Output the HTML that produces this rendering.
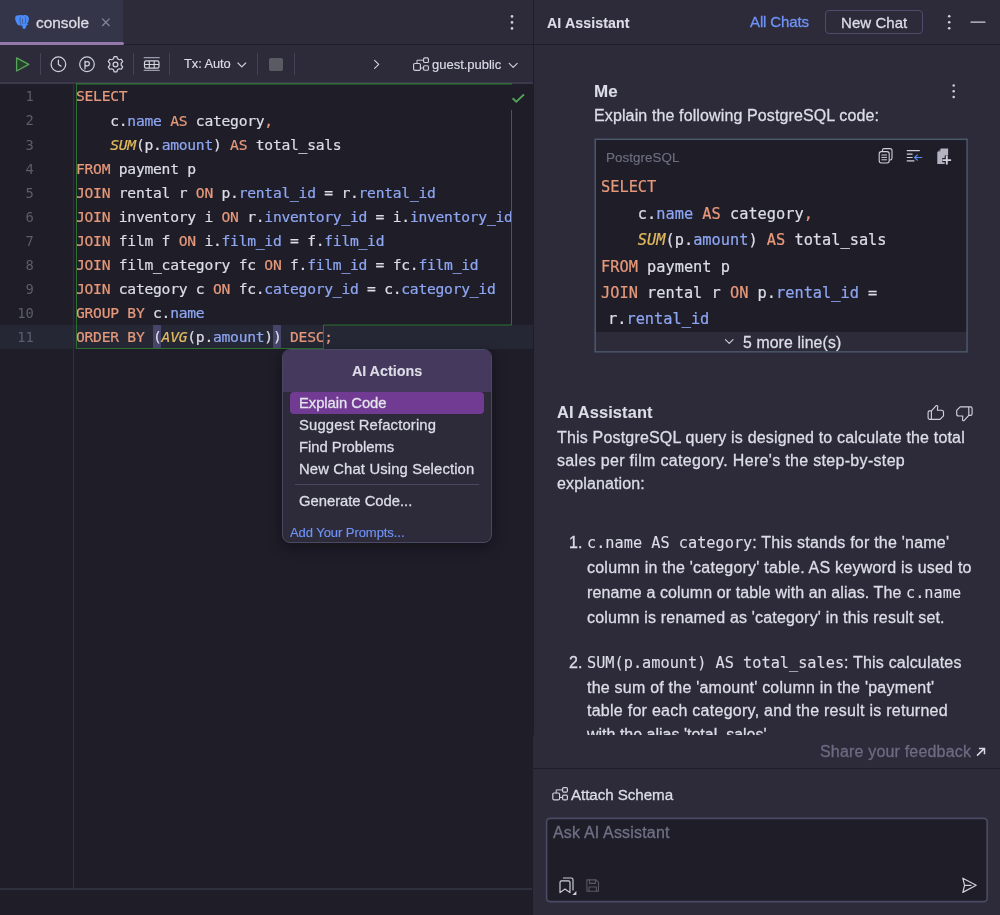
<!DOCTYPE html>
<html lang="en">
<head>
<meta charset="utf-8">
<title>console</title>
<style>
*{box-sizing:border-box;margin:0;padding:0}
html,body{width:1000px;height:915px;overflow:hidden;background:#2d2b3a}
body{position:relative;font-family:"Liberation Sans",sans-serif;color:#dcdde6;-webkit-font-smoothing:antialiased}
.abs{position:absolute}
.mono{font-family:"DejaVu Sans Mono","Liberation Mono",monospace}
.t{position:absolute;white-space:pre;line-height:1;will-change:transform;-webkit-text-stroke:0.3px currentColor}
svg{position:absolute;overflow:visible}

/* ---------- left: editor ---------- */
#left{position:absolute;left:0;top:0;width:533px;height:915px;background:#1e1d28;overflow:hidden}
#tabbar{position:absolute;left:0;top:0;width:533px;height:45px;background:#2d2b3a}
#tab{position:absolute;left:0;top:0;width:123px;height:44px;background:#353549}
#tabline{position:absolute;left:0;top:41.6px;width:123.5px;height:3.5px;background:#9379ac;border-radius:0 2px 2px 0;z-index:2}
#tbsep{position:absolute;left:123px;top:44px;width:410px;height:1px;background:#1f1d27}
#toolbar{position:absolute;left:0;top:45px;width:533px;height:39px;background:#2d2b3a;border-bottom:2px solid #3b3a4d}
.vsep{position:absolute;top:53px;width:1px;height:22px;background:#434456}
#gutline{position:absolute;left:73px;top:83px;width:1px;height:806px;background:#30313f}
#botline{position:absolute;left:0;top:888px;width:533px;height:2px;background:#2f303d}
#curline{position:absolute;left:0;top:325px;width:533px;height:24px;background:#262735}
.ln{will-change:transform;position:absolute;left:0;width:33.5px;text-align:right;color:#5b5d6c;font-size:13.8px;letter-spacing:-0.2px;line-height:1;white-space:pre}
.cl{-webkit-text-stroke:0.22px currentColor;will-change:transform;position:absolute;left:76.2px;white-space:pre;font-size:14.65px;letter-spacing:-0.255px;line-height:1;color:#dcdde6}
.k{color:#e6997b}.c{color:#8ea6f2}.f{color:#e2bb5f;font-style:italic}
.brk{background:#45465d}

/* ---------- popup ---------- */
#pop{position:absolute;left:282px;top:349px;width:210px;height:194px;border-radius:8px;background:#2d2a3a;border:1px solid #4c4861;overflow:hidden;box-shadow:0 4px 14px rgba(0,0,0,.35)}
#pophead{position:absolute;left:0;top:0;width:100%;height:42px;background:#45395d}
#sel{position:absolute;left:7px;top:41.7px;width:194px;height:22.2px;border-radius:4px;background:#713b94}
#popsep{position:absolute;left:12px;top:134px;width:184px;height:1px;background:#4b495f}

/* ---------- right: assistant ---------- */
#split{position:absolute;left:533px;top:0;width:1px;height:915px;background:#1f1d27}
#right{position:absolute;left:534px;top:0;width:466px;height:915px;background:#2d2b3a;overflow:hidden}
#rhline{position:absolute;left:0;top:44px;width:466px;height:1px;background:#1f1d27}
#newchat{position:absolute;left:291px;top:10px;width:98px;height:24px;border:1px solid #4d4d6b;border-radius:4px}
#code{position:absolute;left:60.5px;top:138.5px;width:373.5px;height:214px;background:#1e1d28;border:1px solid #1e1d28}
#more{position:absolute;left:0;bottom:0;width:100%;height:20px;background:#2d2b3a}
.cc{-webkit-text-stroke:0.22px currentColor;will-change:transform;position:absolute;left:5.6px;white-space:pre;font-size:15.3px;line-height:1;color:#dcdde6}
#chatclip{position:absolute;left:0;top:46px;width:466px;height:689px;overflow:hidden}
#chatclip>*{margin-top:-46px}
.ch{font-size:16px;color:#dcdde6}
.mc{font-size:15.25px;letter-spacing:0;-webkit-text-stroke:0.12px currentColor}
#insep{position:absolute;left:0;top:767.5px;width:466px;height:1px;background:#1f1d27}
#input{position:absolute;left:12px;top:817.5px;width:441px;height:84.5px;background:#1e1d28;border:1px solid #1e1d28;border-radius:4px}
</style>
</head>
<body>

<!-- ================= LEFT ================= -->
<div id="left">
  <div id="tabbar">
    <div id="tab"></div><div id="tabline"></div>
    <span class="t" id="t_console" style="left:36.2px;top:14.5px;font-size:15.4px;color:#dcdde6;letter-spacing:-0.018px">console</span>
  </div>
  <div id="tbsep"></div>
  <div id="toolbar"></div>
  <div class="vsep" style="left:40px"></div>
  <div class="vsep" style="left:133px"></div>
  <div class="vsep" style="left:169px"></div>
  <div class="vsep" style="left:257px"></div>
  <div class="vsep" style="left:294px"></div>
  <span class="t" id="t_tx" style="left:183.5px;top:57.5px;font-size:12.9px;color:#dcdde6;letter-spacing:-0.078px;-webkit-text-stroke:0.15px currentColor">Tx: Auto</span>
  <div class="abs" style="left:269px;top:57.5px;width:13.5px;height:13px;border-radius:2px;background:#5a5b62"></div>
  <span class="t" id="t_guest" style="left:432px;top:57.5px;font-size:13px;color:#dcdde6;letter-spacing:-0.013px;-webkit-text-stroke:0.15px currentColor">guest.public</span>

  <div id="curline"></div>
  <div class="abs" style="left:152.6px;top:325px;width:8.4px;height:23.4px;background:#47446a"></div>
  <div class="abs" style="left:272.8px;top:325px;width:8.4px;height:23.4px;background:#47446a"></div>
  <div id="gutline"></div>
  <div id="botline"></div>
  <div id="lines">
    <span class="ln mono" style="top:90.3px">1</span><span class="cl mono" style="top:89.4px"><span class="k">SELECT</span></span>
    <span class="ln mono" style="top:114.4px">2</span><span class="cl mono" style="top:113.5px">    c.<span class="c">name</span> <span class="k">AS</span> category<span class="k">,</span></span>
    <span class="ln mono" style="top:138.5px">3</span><span class="cl mono" style="top:137.6px">    <span class="f">SUM</span>(p.<span class="c">amount</span>) <span class="k">AS</span> total_sals</span>
    <span class="ln mono" style="top:162.6px">4</span><span class="cl mono" style="top:161.7px"><span class="k">FROM</span> payment p</span>
    <span class="ln mono" style="top:186.7px">5</span><span class="cl mono" style="top:185.8px"><span class="k">JOIN</span> rental r <span class="k">ON</span> p.<span class="c">rental_id</span> = r.<span class="c">rental_id</span></span>
    <span class="ln mono" style="top:210.8px">6</span><span class="cl mono" style="top:209.9px"><span class="k">JOIN</span> inventory i <span class="k">ON</span> r.<span class="c">inventory_id</span> = i.<span class="c">inventory_id</span></span>
    <span class="ln mono" style="top:234.9px">7</span><span class="cl mono" style="top:234.0px"><span class="k">JOIN</span> film f <span class="k">ON</span> i.<span class="c">film_id</span> = f.<span class="c">film_id</span></span>
    <span class="ln mono" style="top:259.0px">8</span><span class="cl mono" style="top:258.1px"><span class="k">JOIN</span> film_category fc <span class="k">ON</span> f.<span class="c">film_id</span> = fc.<span class="c">film_id</span></span>
    <span class="ln mono" style="top:283.1px">9</span><span class="cl mono" style="top:282.2px"><span class="k">JOIN</span> category c <span class="k">ON</span> fc.<span class="c">category_id</span> = c.<span class="c">category_id</span></span>
    <span class="ln mono" style="top:307.2px">10</span><span class="cl mono" style="top:306.3px"><span class="k">GROUP BY</span> c.<span class="c">name</span></span>
    <span class="ln mono" style="top:331.3px">11</span><span class="cl mono" style="top:330.4px"><span class="k">ORDER BY</span> (<span class="f">AVG</span>(p.<span class="c">amount</span>)) <span class="k">DESC;</span></span>
  </div>
</div>

<!-- ================= RIGHT ================= -->
<div id="split"></div>
<div class="abs" style="left:532px;top:735px;width:1px;height:180px;background:#1f1d27"></div>
<div class="abs" style="left:533px;top:735px;width:1px;height:180px;background:#2d2b3a;z-index:1"></div>
<div class="abs" style="left:533px;top:767.5px;width:1px;height:1px;background:#1f1d27;z-index:2"></div>
<div id="right">
  <div id="rhline"></div>
  <span class="t" id="t_hdr" style="left:12.8px;top:15.6px;font-size:14.2px;font-weight:bold;color:#dcdde6;letter-spacing:0.094px;-webkit-text-stroke:0.1px currentColor">AI Assistant</span>
  <span class="t" id="t_all" style="left:216px;top:14px;font-size:15px;color:#6f93f7;letter-spacing:-0.116px">All Chats</span>
  <div id="newchat"></div>
  <span class="t" id="t_new" style="left:306.5px;top:14.5px;font-size:15px;color:#dcdde6;letter-spacing:0.056px">New Chat</span>

  <span class="t" id="t_me" style="left:59.8px;top:83px;font-size:17px;font-weight:bold;color:#dcdde6;letter-spacing:0.125px;-webkit-text-stroke:0.1px currentColor">Me</span>
  <span class="t" id="t_expl" style="left:59.8px;top:107.5px;font-size:16px;color:#dcdde6;letter-spacing:0.122px">Explain the following PostgreSQL code:</span>

  <div id="code">
    <span class="t" id="t_pg" style="left:10px;top:11.5px;font-size:13.4px;color:#6d6f80;letter-spacing:0.061px;-webkit-text-stroke:0.15px currentColor">PostgreSQL</span>
    <span class="cc mono" style="top:40.9px"><span class="k">SELECT</span></span>
    <span class="cc mono" style="top:67.2px">    c.<span class="c">name</span> <span class="k">AS</span> category<span class="k">,</span></span>
    <span class="cc mono" style="top:93.6px">    <span class="f">SUM</span>(p.<span class="c">amount</span>) <span class="k">AS</span> total_sals</span>
    <span class="cc mono" style="top:120.0px"><span class="k">FROM</span> payment p</span>
    <span class="cc mono" style="top:146.3px"><span class="k">JOIN</span> rental r <span class="k">ON</span> p.<span class="c">rental_id</span> =</span>
    <span class="cc mono" style="top:172.6px;margin-left:7.2px">r.<span class="c">rental_id</span></span>
    <div id="more"></div>
    <span class="t" id="t_more" style="left:147.5px;top:195px;font-size:15.8px;color:#dcdde6;letter-spacing:0.125px">5 more line(s)</span>
  </div>

  <div id="chatclip">
    <span class="t" id="c0" style="left:22.5px;top:404px;font-size:16.4px;font-weight:bold;letter-spacing:0.125px;-webkit-text-stroke:0.1px currentColor">AI Assistant</span>
    <span class="t ch" id="c1" style="left:22.5px;top:429.8px;letter-spacing:0.180px">This PostgreSQL query is designed to calculate the total</span>
    <span class="t ch" id="c2" style="left:22.5px;top:453.1px;letter-spacing:0.321px">sales per film category. Here's the step-by-step</span>
    <span class="t ch" id="c3" style="left:22.5px;top:476.40000000000003px;letter-spacing:0.132px">explanation:</span>
    <span class="t ch" id="n1" style="left:35px;top:534.5px">1.</span>
    <span class="t ch" id="c4" style="left:52.7px;top:534.5px;letter-spacing:0.220px"><span class="mc mono">c.name AS category</span>: This stands for the 'name'</span>
    <span class="t ch" id="c5" style="left:52.7px;top:560px;letter-spacing:0.230px">column in the 'category' table. AS keyword is used to</span>
    <span class="t ch" id="c6" style="left:52.7px;top:584.5px;letter-spacing:0.101px">rename a column or table with an alias. The <span class="mc mono">c.name</span></span>
    <span class="t ch" id="c7" style="left:52.7px;top:609.5px;letter-spacing:0.181px">column is renamed as 'category' in this result set.</span>
    <span class="t ch" id="n2" style="left:35px;top:654.5px">2.</span>
    <span class="t ch" id="c8" style="left:52.7px;top:654.5px;letter-spacing:0.184px"><span class="mc mono">SUM(p.amount) AS total_sales</span>: This calculates</span>
    <span class="t ch" id="c9" style="left:52.7px;top:680px;letter-spacing:0.224px">the sum of the 'amount' column in the 'payment'</span>
    <span class="t ch" id="c10" style="left:52.7px;top:703.3px;letter-spacing:0.264px">table for each category, and the result is returned</span>
    <span class="t ch" id="c11" style="left:52.7px;top:726.5px">with the alias 'total_sales'.</span>
  </div>

  <span class="t" id="t_share" style="left:286px;top:743.5px;font-size:16px;color:#6d6b82;letter-spacing:0.180px">Share your feedback</span>
  <div id="insep"></div>
  <span class="t" id="t_attach" style="left:37px;top:786.5px;font-size:15.2px;color:#dcdde6;letter-spacing:-0.075px">Attach Schema</span>
  <div id="input">
    <span class="t" id="t_ask" style="left:6px;top:6.5px;font-size:16px;color:#6f7186;letter-spacing:0.171px">Ask AI Assistant</span>
  </div>
</div>

<!-- ================= ICONS / LINES ================= -->
<svg id="ico" width="1000" height="915" viewBox="0 0 1000 915" style="left:0;top:0" fill="none" stroke-linecap="round" stroke-linejoin="round">
  <!-- statement frame -->
  <path d="M76 83.9 H512" stroke="#2f7a34" stroke-width="1.3" stroke-linecap="butt"/>
  <path d="M511.5 110 V325 H323.5 V348.5 H76.5 V83" stroke="#2c7031" stroke-width="1" stroke-linecap="butt" stroke-linejoin="miter"/>
  <!-- check -->
  <path d="M512.6 98.2 L516.3 101.7 L524 94.5" stroke="#52a15a" stroke-width="1.9" stroke-linecap="butt" stroke-linejoin="miter"/>
  <!-- pg elephant -->
  <g fill="#4b8cfb" stroke="none">
    <path d="M15.2 19.2 C14.6 16.4 16.6 14.8 19.2 15.4 C20.6 14.8 22.2 14.9 23.2 15.5 C25.4 14.4 28.6 15.4 28.9 18.4 C29.1 20.6 28 22.6 26.9 24 L28.6 24.3 L26.6 25.2 C26.3 27 25.6 29 23.9 29 C22.4 29 22.3 27.2 22.3 25.6 L20.2 25.4 C18.6 25.6 17.4 24.6 16.8 23.2 C15.9 22 15.5 20.6 15.2 19.2 Z"/>
  </g>
  <path d="M20.3 17.2 C19.8 19.6 20 22 20.6 24.4 M25.2 17 C26.2 19 26 21.6 25 23.6 M22.6 19 C22.2 20.6 22.4 22.4 22.9 23.6" stroke="#35354a" stroke-width="0.7" opacity=".75"/>
  <!-- tab close -->
  <path d="M102.2 18.7 L109.5 26 M109.5 18.7 L102.2 26" stroke="#8a8b9e" stroke-width="1.15" stroke-linecap="butt"/>
  <!-- kebab (editor tabs) -->
  <g fill="#cfd0da" stroke="none"><circle cx="512" cy="16.4" r="1.3"/><circle cx="512" cy="22.4" r="1.3"/><circle cx="512" cy="28.4" r="1.3"/></g>
  <!-- run -->
  <path d="M16.6 57.9 L28.7 64.4 L16.6 71 Z" fill="#25402c" stroke="#57a55a" stroke-width="1.3"/>
  <g stroke="#cfd0da" stroke-width="1.25" transform="translate(0 .55)">
    <!-- clock -->
    <circle cx="58.4" cy="63.7" r="7.3"/>
    <path d="M58.4 59.6 V64 L61 65.6"/>
    <!-- P -->
    <circle cx="87" cy="63.7" r="7.3"/>
    <path d="M85 68.2 V60.6 M85 62.4 C85.6 60.6 89.4 60.4 89.4 63.2 C89.4 66 85.6 65.8 85 64.2" stroke-width="1.3"/>
    <!-- gear -->
    <circle cx="115.5" cy="63.9" r="2.4"/>
    <path d="M114.1 56.1 h2.8 l.6 2.1 l1.7 1 l2.1 -.5 l1.4 2.4 l-1.5 1.6 v2 l1.5 1.6 l-1.4 2.4 l-2.1 -.5 l-1.7 1 l-.6 2.1 h-2.8 l-.6 -2.1 l-1.7 -1 l-2.1 .5 l-1.4 -2.4 l1.5 -1.6 v-2 l-1.5 -1.6 l1.4 -2.4 l2.1 .5 l1.7 -1 z"/>
  </g>
  <!-- table -->
  <path d="M144.2 57.7 H159.3 M144.2 70.4 H159.3" stroke="#9a9bab" stroke-width="1.2"/>
  <rect x="144.5" y="60.9" width="14.5" height="7.2" rx="1.6" stroke="#d4d5de" stroke-width="1.2"/>
  <path d="M144.5 64.5 H159 M149.3 60.9 V68.1 M154.2 60.9 V68.1" stroke="#d4d5de" stroke-width="1.1" stroke-linecap="butt"/>
  <g stroke="#cfd0da" stroke-width="1.15">
    <!-- chevrons -->
    <path d="M237.9 63 L241.8 66.9 L245.7 63"/>
    <path d="M374.6 60.4 L378.7 64.4 L374.6 68.4"/>
    <path d="M509.2 63.4 L513.2 67.4 L517.2 63.4"/>
    <!-- schema icon toolbar -->
    <rect x="413.6" y="63.5" width="6.8" height="6.8" rx="1.2"/>
    <rect x="423.6" y="57.9" width="4.8" height="4.6" rx="1.1"/>
    <rect x="423.6" y="65.7" width="4.8" height="4.6" rx="1.1"/>
    <path d="M417 63.5 V60.2 H423.6 M420.4 68 H423.6" stroke-width="1"/>
  </g>
  <!-- header right icons -->
  <g fill="#cfd0da" stroke="none"><circle cx="949.2" cy="16.2" r="1.3"/><circle cx="949.2" cy="22.2" r="1.3"/><circle cx="949.2" cy="28.2" r="1.3"/>
     <circle cx="953.7" cy="85.6" r="1.25"/><circle cx="953.7" cy="91.3" r="1.25"/><circle cx="953.7" cy="97" r="1.25"/></g>
  <path d="M971 22.2 H985" stroke="#cfd0da" stroke-width="1.2"/>
  <rect x="595.2" y="139.3" width="371.9" height="212.6" stroke="#4c596d" stroke-width="1.5" stroke-linejoin="miter"/>
  <rect x="546.6" y="818.3" width="440.6" height="83.3" rx="3.5" stroke="#4a4a64" stroke-width="1.7"/>
  <!-- code block icons -->
  <g stroke="#cfd0da" stroke-width="1.1">
    <rect x="879.2" y="151.6" width="10" height="11.4" rx="2.2"/>
    <path d="M882.4 151.2 V150.4 C882.4 149.2 883.2 148.6 884.2 148.6 H890 C891.2 148.6 892 149.4 892 150.6 V158 C892 159.2 891.4 160 890.2 160 H889.6"/>
    <path d="M881.8 155 H886.6 M881.8 157.4 H886.6 M881.8 159.8 H886.6" stroke-width="1"/>
    <path d="M907.2 150.6 H919.4 M907.2 154.1 H912.2 M907.2 157.5 H912.2 M907.2 160.9 H914"/>
  </g>
  <path d="M921.8 157.5 H914.8 M917.4 154.9 L914.6 157.5 L917.4 160.1" stroke="#5b8df0" stroke-width="1.2"/>
  <path d="M941 148.4 H948.1 V163.9 H937.3 V152.1 Z" fill="#b3b3c4" stroke="none"/>
  <path d="M937.6 151.4 L940.4 148.6 V151.4 Z" fill="#1e1d28" stroke="none" opacity=".55"/>
  <path d="M946.8 155.6 V164.6 M942.3 160.1 H951.3" stroke="#1e1d28" stroke-width="4.2" stroke-linecap="butt"/>
  <path d="M946.8 155.8 V164.4 M942.5 160.1 H951.1" stroke="#d0d1db" stroke-width="1.9" stroke-linecap="butt"/>
  <!-- more lines chevron -->
  <path d="M725.4 339.6 L729.2 343.4 L733 339.6" stroke="#cfd0da" stroke-width="1.1"/>
  <!-- thumbs -->
  <g stroke="#cfd0da" stroke-width="1.15">
    <path d="M931.4 410.8 L936.2 405.6 C937.2 405.2 937.8 405.8 937.7 406.8 L937.4 410.2 H941.6 C942.8 410.2 943.5 411 943.5 412.2 V415.8 L940 419.3 H929.6 C928.6 419.3 928.1 418.7 928.1 417.8 V412.4 C928.1 411.4 928.7 410.8 929.6 410.8 H931.4 V419.3"/>
    <path d="M968.8 415.4 L964 420.6 C963 421 962.4 420.4 962.5 419.4 L962.8 416 H958.6 C957.4 416 956.7 415.2 956.7 414 V410.4 L960.2 406.9 H970.6 C971.6 406.9 972.1 407.5 972.1 408.4 V413.8 C972.1 414.8 971.5 415.4 970.6 415.4 H968.8 V406.9"/>
  </g>
  <!-- feedback arrow -->
  <path d="M977 755.6 L984.2 748.6 M978.9 748.5 H984.5 V754.2" stroke="#d6d7e0" stroke-width="1.5" stroke-linecap="butt" stroke-linejoin="miter"/>
  <!-- attach schema icon -->
  <g stroke="#cfd0da" stroke-width="1.2">
    <rect x="552.8" y="793" width="6.8" height="6.8" rx="1.2"/>
    <rect x="562.6" y="787.6" width="4.8" height="4.6" rx="1.1"/>
    <rect x="562.6" y="795.2" width="4.8" height="4.6" rx="1.1"/>
    <path d="M556.2 793 V789.9 H562.6 M559.6 797.5 H562.6" stroke-width="1"/>
  </g>
  <!-- bookmark -->
  <g stroke="#cfd0da" stroke-width="1.15">
    <path d="M560 892.6 V882.4 C560 881.4 560.6 880.8 561.6 880.8 H568.4 C569.4 880.8 570 881.4 570 882.4 V892.6 L565 889 Z"/>
    <path d="M563.4 878 H571.2 C572.4 878 573 878.6 573 879.8 V890"/>
  </g>
  <path d="M576.4 891 V895 H572.4 Z" fill="#cfd0da" stroke="none"/>
  <!-- save (disabled) -->
  <g stroke="#59595f" stroke-width="1.1">
    <path d="M586.9 879.9 H596 L598.5 882.4 V891.2 H586.9 Z"/>
    <path d="M589.6 879.9 V883.4 H595.4 V879.9 M589 891.2 V887 H596.4 V891.2"/>
  </g>
  <!-- send -->
  <path d="M962.8 878.2 L976.2 885.3 L962.8 892.4 L964.6 885.3 Z M964.6 885.3 H971" stroke="#cfd0da" stroke-width="1.2"/>
</svg>

<!-- ================= POPUP ================= -->
<div id="pop">
  <div id="pophead"></div>
  <div id="sel"></div>
  <div id="popsep"></div>
  <span class="t" id="p0" style="left:0;width:208px;text-align:center;top:13.5px;font-size:14.4px;font-weight:bold;color:#dcdde6;letter-spacing:-0.042px;-webkit-text-stroke:0.1px currentColor">AI Actions</span>
  <span class="t" id="p1" style="left:16px;top:45.5px;font-size:14.8px;color:#e4e4ec;letter-spacing:-0.047px">Explain Code</span>
  <span class="t" id="p2" style="left:16px;top:67.5px;font-size:14.8px;color:#dcdde6;letter-spacing:0.162px">Suggest Refactoring</span>
  <span class="t" id="p3" style="left:16px;top:89.5px;font-size:14.8px;color:#dcdde6;letter-spacing:-0.013px">Find Problems</span>
  <span class="t" id="p4" style="left:16px;top:111.5px;font-size:14.8px;color:#dcdde6;letter-spacing:0.145px">New Chat Using Selection</span>
  <span class="t" id="p5" style="left:16px;top:143.5px;font-size:14.8px;color:#dcdde6;letter-spacing:-0.018px">Generate Code...</span>
  <span class="t" id="p6" style="left:7px;top:175.5px;font-size:13px;color:#6f93f7;letter-spacing:-0.062px;-webkit-text-stroke:0.15px currentColor">Add Your Prompts...</span>
</div>

</body>
</html>
